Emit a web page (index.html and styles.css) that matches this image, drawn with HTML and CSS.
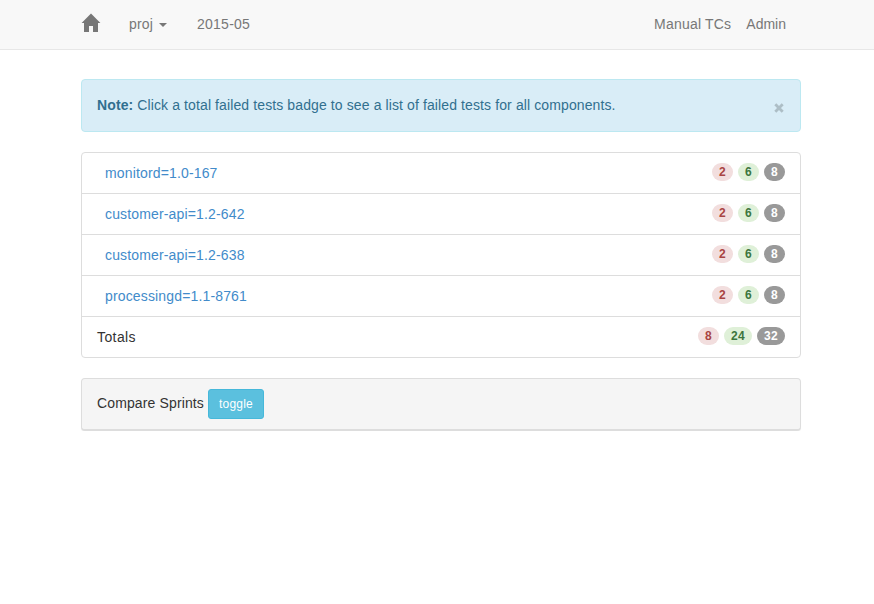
FILE: index.html
```html
<!DOCTYPE html>
<html lang="en">
<head>
<meta charset="utf-8">
<title>2015-05</title>
<link rel="stylesheet" href="styles.css">
</head>
<body>
<nav class="navbar">
  <div class="container nav-inner">
    <a class="home" href="#" aria-label="Home"><svg width="20" height="20" viewBox="0 0 20 20"><path d="M10 0.4 19.4 10H17V19H12V13H8V19H3V10H0.6Z"/></svg></a>
    <a class="project" href="#">proj<span class="caret"></span></a>
    <a class="sprint" href="#">2015-05</a>
    <a class="manual" href="#">Manual TCs</a>
    <a class="admin" href="#">Admin</a>
  </div>
</nav>
<main class="container">
  <div class="alert">
    <p><strong>Note:</strong> Click a total failed tests badge to see a list of failed tests for all components.</p>
    <button class="close" aria-label="Close"><svg width="10" height="10" viewBox="0 0 10 10"><path d="M1.3 1.3 8.7 8.7M8.7 1.3 1.3 8.7"/></svg></button>
  </div>
  <ul class="list">
    <li><a href="#">monitord=1.0-167</a><span class="badges"><b class="badge failed">2</b><b class="badge passed">6</b><b class="badge total">8</b></span></li>
    <li><a href="#">customer-api=1.2-642</a><span class="badges"><b class="badge failed">2</b><b class="badge passed">6</b><b class="badge total">8</b></span></li>
    <li><a href="#">customer-api=1.2-638</a><span class="badges"><b class="badge failed">2</b><b class="badge passed">6</b><b class="badge total">8</b></span></li>
    <li><a href="#">processingd=1.1-8761</a><span class="badges"><b class="badge failed">2</b><b class="badge passed">6</b><b class="badge total">8</b></span></li>
    <li><span class="label">Totals</span><span class="badges"><b class="badge failed">8</b><b class="badge passed">24</b><b class="badge total">32</b></span></li>
  </ul>
  <section class="panel"><span>Compare Sprints</span><button class="toggle">toggle</button></section>
</main>
</body>
</html>
```
FILE: styles.css
```css
* { box-sizing: border-box; }
body {
  margin: 0;
  background: #fff;
  color: #333;
  font: 14px/20px "Liberation Sans", Arial, sans-serif;
}
a { color: #428bca; text-decoration: none; }
.container { width: 720px; margin: 0 0 0 81px; }
.navbar { height: 50px; background: #f8f8f8; border-bottom: 1px solid #e7e7e7; }
.nav-inner { display: flex; align-items: center; height: 48px; }
.navbar a { color: #777; }
.home { width: 20px; height: 20px; margin: 0 28px 2px 0; }
.home svg { display: block; fill: #777; }
.project { display: flex; align-items: center; width: 68px; letter-spacing: .2px; }
.sprint { letter-spacing: .25px; }
.caret {
  margin: 2px 0 0 6px;
  border-top: 4px solid #777;
  border-left: 4px solid transparent;
  border-right: 4px solid transparent;
}
.manual { margin-left: auto; letter-spacing: .2px; }
.admin { margin: 0 15px; }
.alert {
  display: flex;
  justify-content: space-between;
  height: 53px;
  margin-top: 29px;
  padding: 15px;
  background: #d9edf7;
  border: 1px solid #bce8f1;
  border-radius: 4px;
  color: #31708f;
  letter-spacing: .11px;
}
.alert p { margin: 0; }
.close { width: 10px; height: 10px; margin: 8px 1px 0 0; padding: 0; border: 0; background: none; }
.close svg { display: block; stroke: #adbec6; stroke-width: 2.8; fill: none; }
.list {
  margin: 20px 0;
  padding: 0;
  list-style: none;
  border: 1px solid #ddd;
  border-radius: 4px;
}
.list li { display: flex; justify-content: space-between; height: 41px; padding: 10px 15px; border-bottom: 1px solid #ddd; }
.list li:last-child { height: 40px; border-bottom: 0; }
.list a { padding-left: 8px; letter-spacing: .15px; }
.label { letter-spacing: .4px; }
.badges { display: flex; gap: 5px; height: 18px; }
.badge {
  min-width: 21px;
  height: 18px;
  padding: 3px 7px;
  border-radius: 10px;
  font-size: 12px;
  line-height: 12px;
  letter-spacing: .3px;
}
.failed { background: #f2dede; color: #a94442; }
.passed { background: #dff0d8; color: #3c763d; }
.total { background: #999; color: #fff; }
.panel {
  display: flex;
  gap: 4px;
  height: 53px;
  padding: 10px 15px;
  background: #f5f5f5;
  border: 1px solid #ddd;
  border-bottom-width: 2px;
  border-radius: 4px;
  box-shadow: 0 1px 1px rgba(0, 0, 0, .05);
}
.panel span { padding-top: 4px; letter-spacing: .13px; }
.toggle {
  width: 56px;
  height: 30px;
  padding: 0;
  border: 1px solid #46b8da;
  border-radius: 3px;
  background: #5bc0de;
  color: #fff;
  font: 12px/18px "Liberation Sans", Arial, sans-serif;
  letter-spacing: .2px;
}
```
